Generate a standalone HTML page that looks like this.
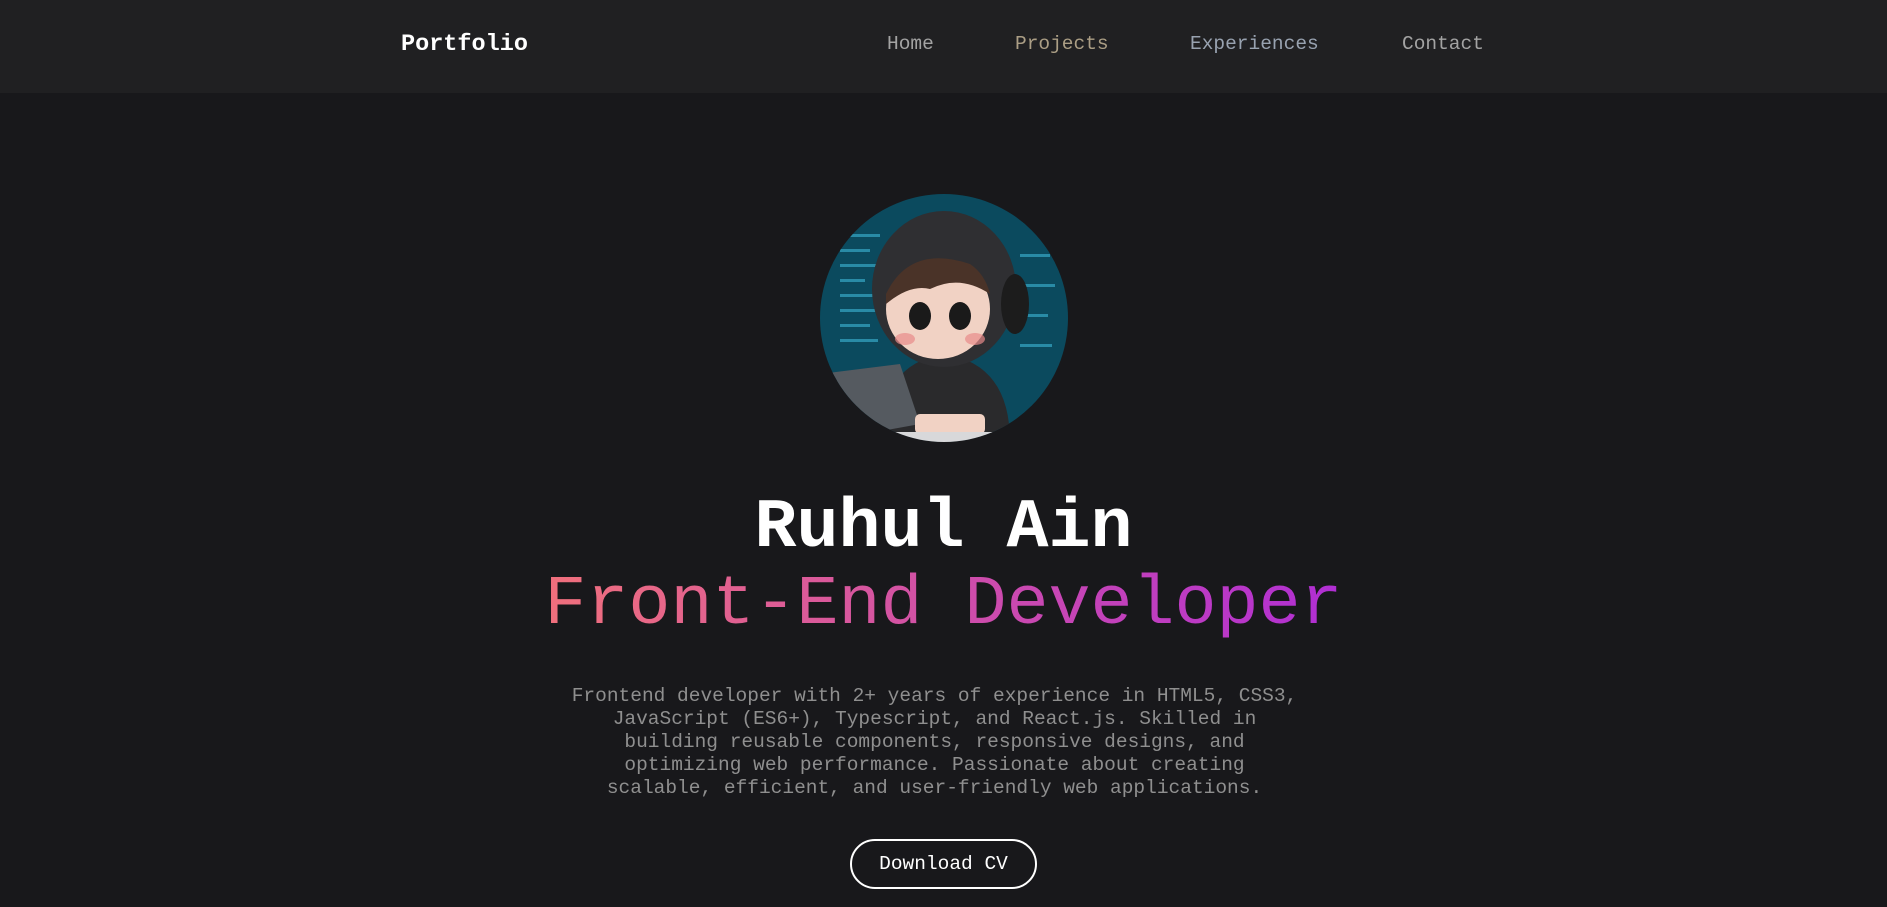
<!DOCTYPE html>
<html><head><meta charset="utf-8"><style>
*{margin:0;padding:0;box-sizing:border-box}
body{width:1887px;height:907px;background:#18181b;font-family:"Liberation Mono","Courier New",monospace;overflow:hidden;position:relative}
nav{position:absolute;left:0;top:0;width:1887px;height:93px;background:#202022}
.logo{position:absolute;left:401px;top:31px;color:#fff;font-weight:bold;font-size:23.5px}
.nl{position:absolute;top:33px;font-size:19.5px}
.av{position:absolute;left:820px;top:194px;width:248px;height:248px;border-radius:50%;overflow:hidden}
h1{position:absolute;left:0;width:1887px;top:489px;text-align:center;color:#fff;font-size:70px;font-weight:bold;line-height:80px}
h2{position:absolute;left:0;width:1887px;top:566px;text-align:center;font-size:70px;font-weight:normal;line-height:80px}
h2 span{background:linear-gradient(90deg,#f0707c,#b02ed4);-webkit-background-clip:text;background-clip:text;color:transparent}
p{position:absolute;left:-9px;width:1887px;top:685px;text-align:center;color:#8f8f8f;font-size:19.5px;line-height:23px}
.btn{position:absolute;left:850px;top:839px;width:187px;height:50px;border:2px solid #fff;border-radius:25px;color:#fff;font-size:19.5px;text-align:center;line-height:46px}
</style></head><body>
<nav>
<div class="logo">Portfolio</div>
<div class="nl" style="left:887px;color:#a3a3a3">Home</div>
<div class="nl" style="left:1015px;color:#ab9e85">Projects</div>
<div class="nl" style="left:1190px;color:#98a2b0">Experiences</div>
<div class="nl" style="left:1402px;color:#a3a3a3">Contact</div>
</nav>
<div class="av"><svg width="248" height="248" viewBox="0 0 248 248">
<rect width="248" height="248" fill="#0b4a5e"/>
<g fill="#3fb8d8" opacity=".6">
<rect x="20" y="40" width="40" height="3"/><rect x="20" y="55" width="30" height="3"/><rect x="20" y="70" width="45" height="3"/><rect x="20" y="85" width="25" height="3"/><rect x="20" y="100" width="35" height="3"/><rect x="20" y="115" width="40" height="3"/><rect x="20" y="130" width="30" height="3"/><rect x="20" y="145" width="38" height="3"/>
<rect x="200" y="60" width="30" height="3"/><rect x="200" y="90" width="35" height="3"/><rect x="200" y="120" width="28" height="3"/><rect x="200" y="150" width="32" height="3"/>
</g>
<path d="M60 248 Q60 170 124 160 Q190 170 190 248Z" fill="#2a2a2c"/>
<ellipse cx="124" cy="95" rx="72" ry="78" fill="#2f2f32"/>
<ellipse cx="118" cy="115" rx="52" ry="50" fill="#f1d2c4"/>
<path d="M66 100 Q90 50 150 70 Q165 80 170 100 Q140 80 110 95 Q90 90 66 110Z" fill="#4a3328"/>
<ellipse cx="100" cy="122" rx="11" ry="14" fill="#1a1a1a"/><ellipse cx="140" cy="122" rx="11" ry="14" fill="#1a1a1a"/>
<ellipse cx="85" cy="145" rx="10" ry="6" fill="#e88a8a" opacity=".7"/><ellipse cx="155" cy="145" rx="10" ry="6" fill="#e88a8a" opacity=".7"/>
<ellipse cx="195" cy="110" rx="14" ry="30" fill="#1c1c1c"/>
<path d="M0 180 L80 170 L100 230 L0 248Z" fill="#555a60"/>
<rect x="95" y="220" width="70" height="20" rx="5" fill="#f1d2c4"/>
<rect x="0" y="238" width="248" height="10" fill="#d8d8da"/>
</svg></div>
<h1>Ruhul Ain</h1>
<h2><span>Front-End Developer</span></h2>
<p>Frontend developer with 2+ years of experience in HTML5, CSS3,<br>JavaScript (ES6+), Typescript, and React.js. Skilled in<br>building reusable components, responsive designs, and<br>optimizing web performance. Passionate about creating<br>scalable, efficient, and user-friendly web applications.</p>
<div class="btn">Download CV</div>
</body></html>
